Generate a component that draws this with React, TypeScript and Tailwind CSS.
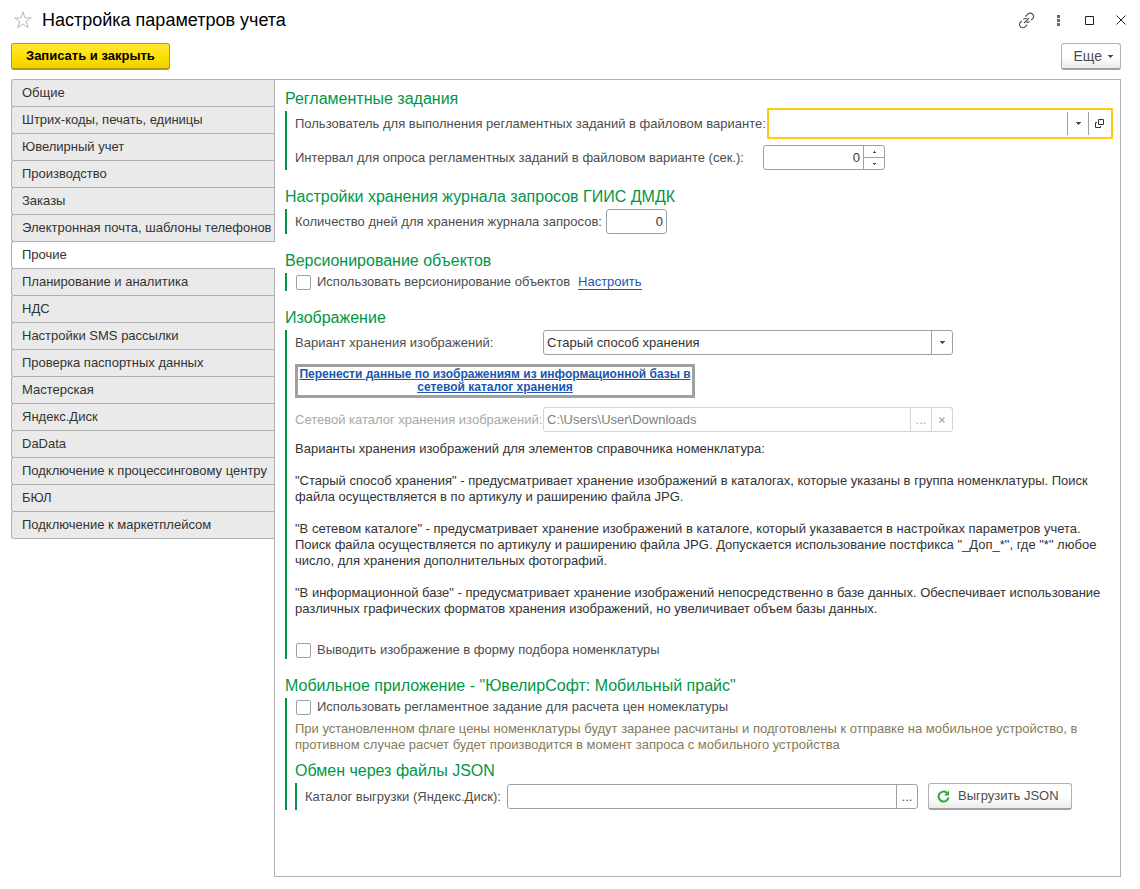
import React from 'react'
import clsx from 'clsx'

const TABS = [
  'Общие',
  'Штрих-коды, печать, единицы',
  'Ювелирный учет',
  'Производство',
  'Заказы',
  'Электронная почта, шаблоны телефонов',
  'Прочие',
  'Планирование и аналитика',
  'НДС',
  'Настройки SMS рассылки',
  'Проверка паспортных данных',
  'Мастерская',
  'Яндекс.Диск',
  'DaData',
  'Подключение к процессинговому центру',
  'БЮЛ',
  'Подключение к маркетплейсом',
]

const fieldClass = 'flex h-[25px] overflow-hidden rounded-[3px] border border-[#a0a0a0] bg-white'
const inputClass = 'min-w-0 flex-1 bg-transparent px-[3px] text-[#333] outline-none'
const sideButtonClass = 'flex w-[21px] shrink-0 items-center justify-center border-l border-[#a0a0a0]'
const grayButtonClass =
  'flex h-[27px] items-center rounded-[3px] border border-[#b0b0b0] border-b-2 border-b-[#a0a0a0] bg-linear-to-b from-white from-50% to-[#ebebeb] text-[#4d4d4d]'

function Caret() {
  return (
    <svg width="5" height="3" viewBox="0 0 5 3" fill="#4d4d4d" shapeRendering="crispEdges">
      <path d="M0 0h5v1H0zM1 1h3v1H1zM2 2h1v1H2z" />
    </svg>
  )
}

function SpinArrow({ up }: { up?: boolean }) {
  return (
    <svg width="3" height="2" viewBox="0 0 3 2" fill="#4d4d4d" shapeRendering="crispEdges">
      <path d={up ? 'M1 0h1v1H1zM0 1h3v1H0z' : 'M0 0h3v1H0zM1 1h1v1H1z'} />
    </svg>
  )
}

function Section({ title, children }: { title: string; children: React.ReactNode }) {
  return (
    <section>
      <h2 className="text-base leading-5 text-[#009646]">{title}</h2>
      <div className="mt-0.5 border-l-2 border-[#009646] pl-2">{children}</div>
    </section>
  )
}

function Check({ label }: { label: string }) {
  const [checked, setChecked] = React.useState(false)
  return (
    <label className="flex h-[18px] items-center gap-1.5 pl-px">
      <input
        type="checkbox"
        checked={checked}
        onChange={(e) => setChecked(e.target.checked)}
        className="size-[15px] appearance-none rounded-xs border border-[#a0a0a0] bg-white checked:bg-[#009646]"
      />
      {label}
    </label>
  )
}

function Header() {
  return (
    <header className="flex h-10 items-center pr-3.5 pl-[3px]">
      <button aria-label="В избранное" className="mr-2.5">
        <svg width="18" height="18" viewBox="0 0 18 18" fill="none" stroke="#b3b9bf">
          <path d="M9 .8l2 6.100h6.300l-5.100 3.700 2 6.100L9 13l-5.200 3.700 2-6.100L.7 6.900H7z" />
        </svg>
      </button>
      <h1 className="flex-1 text-lg text-black">Настройка параметров учета</h1>
      <div className="flex items-center">
        <button aria-label="Получить ссылку" className="mr-[22px]">
          <svg width="17" height="17" viewBox="0 0 17 17" fill="none" stroke="#4d4d4d" strokeWidth="1.1">
            <path d="M7.500 4.500l2.200-2.300a3.300 3.300 0 0 1 4.800 0 3.300 3.300 0 0 1 0 4.600l-1.300 1.400M11.500 9.500c-1 .9-2.200 1-3.300.6M9.200 12.700l-2 2.100a3.300 3.300 0 0 1-4.700 0 3.300 3.300 0 0 1 0-4.700l1.300-1.300M5.300 7.400c1-.9 2.300-1 3.400-.6M6 11.200l5-5.300" />
          </svg>
        </button>
        <button aria-label="Меню" className="mr-[25px]">
          <svg width="3" height="11" viewBox="0 0 3 11" fill="#6a6a6a">
            <rect width="3" height="3" />
            <rect y="4" width="3" height="3" />
            <rect y="8" width="3" height="3" />
          </svg>
        </button>
        <button aria-label="Развернуть" className="mr-[21px]">
          <svg width="10" height="10" viewBox="0 0 10 10" fill="none" stroke="#222">
            <path d="M.5 1.500h8v8h-8z" />
          </svg>
        </button>
        <button aria-label="Закрыть">
          <svg width="10" height="10" viewBox="0 0 10 10" fill="none" stroke="#222">
            <path d="M.5.5l9 9M9.500.5l-9 9" />
          </svg>
        </button>
      </div>
    </header>
  )
}

function App() {
  const [active, setActive] = React.useState('Прочие')
  const [interval, setIntervalValue] = React.useState(0)

  return (
    <div className="flex min-h-screen flex-col bg-white pb-3 pl-[11px] font-['Liberation_Sans',Arial,sans-serif] text-[13px] leading-4 text-[#4d4d4d]">
      <Header />

      <div className="mt-[3px] mr-[19px] flex justify-between">
        <button className="h-[27px] rounded-[3px] border border-b-2 border-[#b39d00] bg-linear-to-b from-[#ffe834] via-[#ffe000] to-[#f0d000] px-3.5 font-bold text-black">
          Записать и закрыть
        </button>
        <button className={clsx(grayButtonClass, 'gap-1.5 pr-[7px] pl-3 text-sm')}>
          Еще
          <Caret />
        </button>
      </div>

      <div className="mt-[9px] mr-[19px] flex flex-1">
        <nav role="tablist" aria-orientation="vertical" className="flex w-[263px] shrink-0 flex-col pt-px">
          {TABS.map((tab) => (
            <button
              key={tab}
              role="tab"
              aria-selected={tab === active}
              onClick={() => setActive(tab)}
              className={clsx(
                '-mt-px h-7 rounded-l-[3px] border border-r-0 border-[#b0b0b0] pl-2.5 text-left whitespace-nowrap text-[#333]',
                tab === active ? 'z-10 -mr-px bg-white' : 'bg-[#eaeaea]',
              )}
            >
              {tab}
            </button>
          ))}
        </nav>

        <main className="flex min-w-0 flex-1 flex-col gap-[17px] border border-[#b0b0b0] px-2.5 pt-[9px] pb-4">
          <Section title="Регламентные задания">
            <div className="flex flex-col gap-[9px]">
              <div className="flex items-center">
                <label htmlFor="user" className="min-w-[468px] shrink-0 pr-1 whitespace-nowrap">
                  Пользователь для выполнения регламентных заданий в файловом варианте:
                </label>
                <div className="flex h-[25px] min-w-0 flex-1 bg-white py-px pr-px outline-2 outline-offset-1 outline-[#fc1]">
                  <input id="user" className={inputClass} />
                  <button aria-label="Выбрать" className={sideButtonClass}>
                    <Caret />
                  </button>
                  <button aria-label="Открыть" className={sideButtonClass}>
                    <svg width="10" height="10" viewBox="0 0 10 10" fill="none" stroke="#333">
                      <path d="M4.500.5h5v5h-5zM3 3.500H1.500v5h5V7" />
                    </svg>
                  </button>
                </div>
              </div>
              <div className="flex items-center">
                <label htmlFor="interval" className="min-w-[468px] shrink-0 pr-1 whitespace-nowrap">
                  Интервал для опроса регламентных заданий в файловом варианте (сек.):
                </label>
                <div className={clsx(fieldClass, 'w-[122px]')}>
                  <input
                    id="interval"
                    value={interval}
                    onChange={(e) => setIntervalValue(Number(e.target.value) || 0)}
                    className={clsx(inputClass, 'text-right')}
                  />
                  <div className="flex w-[21px] shrink-0 flex-col border-l border-[#a0a0a0]">
                    <button
                      aria-label="Увеличить"
                      onClick={() => setIntervalValue(interval + 1)}
                      className="flex flex-1 items-center justify-center border-b border-[#a0a0a0]"
                    >
                      <SpinArrow up />
                    </button>
                    <button
                      aria-label="Уменьшить"
                      onClick={() => setIntervalValue(Math.max(0, interval - 1))}
                      className="flex flex-1 items-center justify-center"
                    >
                      <SpinArrow />
                    </button>
                  </div>
                </div>
              </div>
            </div>
          </Section>

          <Section title="Настройки хранения журнала запросов ГИИС ДМДК">
            <div className="flex items-center">
              <label htmlFor="days" className="w-[311px] shrink-0">
                Количество дней для хранения журнала запросов:
              </label>
              <div className={clsx(fieldClass, 'w-[61px]')}>
                <input id="days" defaultValue="0" className={clsx(inputClass, 'text-right')} />
              </div>
            </div>
          </Section>

          <Section title="Версионирование объектов">
            <div className="flex items-center gap-2">
              <Check label="Использовать версионирование объектов" />
              <a href="#versions" className="border-b border-[#1a56b0] leading-[14px] text-[#1a56b0]">
                Настроить
              </a>
            </div>
          </Section>

          <Section title="Изображение">
            <div className="flex items-center">
              <label htmlFor="storage" className="w-[248px] shrink-0">
                Вариант хранения изображений:
              </label>
              <div className={clsx(fieldClass, 'w-[410px]')}>
                <select id="storage" className={clsx(inputClass, 'appearance-none')}>
                  <option>Старый способ хранения</option>
                  <option>В сетевом каталоге</option>
                  <option>В информационной базе</option>
                </select>
                <span className={clsx(sideButtonClass, 'pointer-events-none')}>
                  <Caret />
                </span>
              </div>
            </div>
            <a
              href="#move"
              className="mt-[9px] flex h-[34px] w-[400px] items-center justify-center border-3 border-[#a0a0a0] text-center text-xs leading-[13px] font-bold whitespace-nowrap text-[#1a56b0] underline"
            >
              Перенести данные по изображениям из информационной базы в
              <br />
              сетевой каталог хранения
            </a>
            <div className="mt-[9px] flex items-center">
              <label htmlFor="folder" className="w-[248px] shrink-0 text-[#a8a8a8]">
                Сетевой каталог хранения изображений:
              </label>
              <div className="flex h-[25px] w-[410px] rounded-[3px] border border-[#d5d5d5]">
                <input
                  id="folder"
                  disabled
                  defaultValue="C:\Users\User\Downloads"
                  className="min-w-0 flex-1 px-[3px] text-[#808080]"
                />
                <button disabled className="w-[21px] border-l border-[#d5d5d5] text-[#a8a8a8]">
                  ...
                </button>
                <button
                  disabled
                  aria-label="Очистить"
                  className="flex w-[21px] items-center justify-center border-l border-[#d5d5d5]"
                >
                  <svg width="6" height="6" viewBox="0 0 6 6" stroke="#a8a8a8" strokeWidth="1.3">
                    <path d="M.5.5l5 5M5.500.5l-5 5" />
                  </svg>
                </button>
              </div>
            </div>
            <div className="mt-[9px] flex flex-col gap-4 text-[#333]">
              <p>Варианты хранения изображений для элементов справочника номенклатура:</p>
              <p>
                "Старый способ хранения" - предусматривает хранение изображений в каталогах, которые указаны в группа номенклатуры. Поиск
                <br />
                файла осуществляется в по артикулу и раширению файла JPG.
              </p>
              <p>
                "В сетевом каталоге" - предусматривает хранение изображений в каталоге, который указавается в настройках параметров учета.
                <br />
                Поиск файла осуществляется по артикулу и раширению файла JPG. Допускается использование постфикса "_Доп_*", где "*" любое
                <br />
                число, для хранения дополнительных фотографий.
              </p>
              <p>
                "В информационной базе" - предусматривает хранение изображений непосредственно в базе данных. Обеспечивает использование
                <br />
                различных графических форматов хранения изображений, но увеличивает объем базы данных.
              </p>
            </div>
            <div className="mt-6">
              <Check label="Выводить изображение в форму подбора номенклатуры" />
            </div>
          </Section>

          <Section title='Мобильное приложение - "ЮвелирСофт: Мобильный прайс"'>
            <Check label="Использовать регламентное задание для расчета цен номеклатуры" />
            <p className="mt-[5px] mb-2 text-[#857a5a]">
              При установленном флаге цены номенклатуры будут заранее расчитаны и подготовлены к отправке на мобильное устройство, в
              <br />
              противном случае расчет будет производится в момент запроса с мобильного устройства
            </p>
            <Section title="Обмен через файлы JSON">
              <div className="flex items-center">
                <label htmlFor="export" className="w-[202px] shrink-0">
                  Каталог выгрузки (Яндекс.Диск):
                </label>
                <div className={clsx(fieldClass, 'w-[411px]')}>
                  <input id="export" className={inputClass} />
                  <button className={sideButtonClass}>...</button>
                </div>
                <button className={clsx(grayButtonClass, 'ml-2.5 w-36 gap-2 pl-2')}>
                  <svg width="13" height="13" viewBox="0 0 13 13" fill="none">
                    <path d="M9.800 2.700A5 5 0 1 0 11.500 7.500" stroke="#2ea836" strokeWidth="2" />
                    <path d="M12 .5V5.500H7z" fill="#2ea836" />
                  </svg>
                  Выгрузить JSON
                </button>
              </div>
            </Section>
          </Section>
        </main>
      </div>
    </div>
  )
}

export default App
